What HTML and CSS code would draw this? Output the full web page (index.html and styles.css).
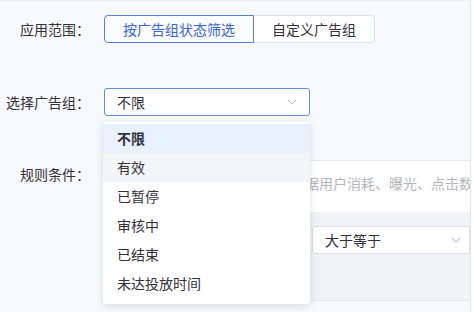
FILE: index.html
```html
<!DOCTYPE html>
<html lang="zh-CN">
<head>
<meta charset="utf-8">
<title>规则设置</title>
<link rel="stylesheet" href="styles.css">
</head>
<body>
<div class="page">
  <div class="row row-scope">
    <div class="label">应用范围：</div>
    <div class="btn-group">
      <button class="seg seg-active">按广告组状态筛选</button>
      <button class="seg">自定义广告组</button>
    </div>
  </div>

  <div class="row row-group">
    <div class="label">选择广告组：</div>
    <div class="select-wrap">
      <div class="select select-focus">
        <span class="select-text">不限</span>
        <svg class="chev" width="10" height="6" viewBox="0 0 10 6"><path d="M1 1 L5 5 L9 1" fill="none" stroke="#b9bdc5" stroke-width="1"/></svg>
      </div>
      <ul class="dropdown">
        <li class="opt opt-selected">不限</li>
        <li class="opt opt-hover">有效</li>
        <li class="opt">已暂停</li>
        <li class="opt">审核中</li>
        <li class="opt">已结束</li>
        <li class="opt">未达投放时间</li>
      </ul>
    </div>
  </div>

  <div class="row row-rule">
    <div class="label label-top">规则条件：</div>
    <div class="rule-box">
      <div class="rule-tip">据用户消耗、曝光、点击数</div>
      <div class="rule-band">
        <div class="select select-metric"></div>
        <div class="select select-op">
          <span class="select-text">大于等于</span>
          <svg class="chev" width="10" height="6" viewBox="0 0 10 6"><path d="M1 1 L5 5 L9 1" fill="none" stroke="#b9bdc5" stroke-width="1"/></svg>
        </div>
      </div>
    </div>
  </div>
</div>
</body>
</html>
```

FILE: styles.css
```css
* { box-sizing: border-box; }

html, body {
  margin: 0;
  padding: 0;
  background: #ffffff;
}

body {
  font-family: "Noto Sans CJK SC", "Noto Sans", sans-serif;
  font-size: 14px;
  color: #34303a;
}

.page {
  width: 471px;
  height: 312px;
  overflow: hidden;
  background: #f8f9fc;
  border-top: 1px solid #eceef1;
  border-right: 1px solid #e3e5e9;
  padding-top: 14px;
}

.row {
  display: flex;
  align-items: center;
  gap: 14px;
}

.row-group { margin-top: 45px; }
.row-rule {
  margin-top: 44px;
  align-items: flex-start;
}

.label {
  width: 90px;
  flex-shrink: 0;
  text-align: right;
  line-height: 20px;
  white-space: nowrap;
  color: #34303a;
}

.label-top { padding-top: 4px; }

.btn-group { display: flex; }

.seg {
  font-family: inherit;
  font-size: 14px;
  height: 28px;
  line-height: 26px;
  padding: 0 18px;
  border: 1px solid #dfe2e7;
  background: #ffffff;
  color: #34303a;
  margin: 0;
  white-space: nowrap;
}

.seg:first-child { border-radius: 4px 0 0 4px; }
.seg:last-child { border-radius: 0 4px 4px 0; border-left: none; }

.seg-active {
  border-color: #5284d6;
  color: #3a66cc;
  background: #fbfcff;
}

.select-wrap { position: relative; }

.select {
  height: 28px;
  display: flex;
  align-items: center;
  justify-content: space-between;
  padding: 0 8px 0 12px;
  background: #ffffff;
  border: 1px solid #dcdfe5;
  border-radius: 3px;
  line-height: 26px;
  white-space: nowrap;
}

.select-focus {
  width: 206px;
  border-color: #5e8fda;
  padding-right: 12px;
}

.chev { display: block; flex-shrink: 0; }

.dropdown {
  position: absolute;
  z-index: 5;
  top: 34px;
  left: -1px;
  width: 207px;
  margin: 0;
  padding: 2px 0 6px;
  list-style: none;
  background: #ffffff;
  border-radius: 4px;
  box-shadow: 0 2px 8px rgba(0, 0, 0, 0.12);
}

.opt {
  height: 29px;
  line-height: 29px;
  padding: 0 14px;
  color: #34303a;
  white-space: nowrap;
}

.opt-selected {
  background: #e8f2fd;
  font-weight: 600;
}

.opt-hover { background: #f4f5f7; }

.rule-box {
  flex: 1;
  min-width: 0;
  background: #ffffff;
  border-top: 1px solid #e6e8ec;
  border-bottom: 1px solid #e6e8ec;
}

.rule-tip {
  height: 51px;
  padding: 12px 0 0 201px;
  line-height: 20px;
  font-size: 14px;
  color: #b3b6bd;
  white-space: nowrap;
  overflow: hidden;
}

.rule-band {
  height: 88px;
  background: #f2f3f6;
  padding: 14px 0 0 16px;
  display: flex;
  gap: 12px;
}

.select-metric { width: 180px; }
.select-op { width: 158px; }
```
